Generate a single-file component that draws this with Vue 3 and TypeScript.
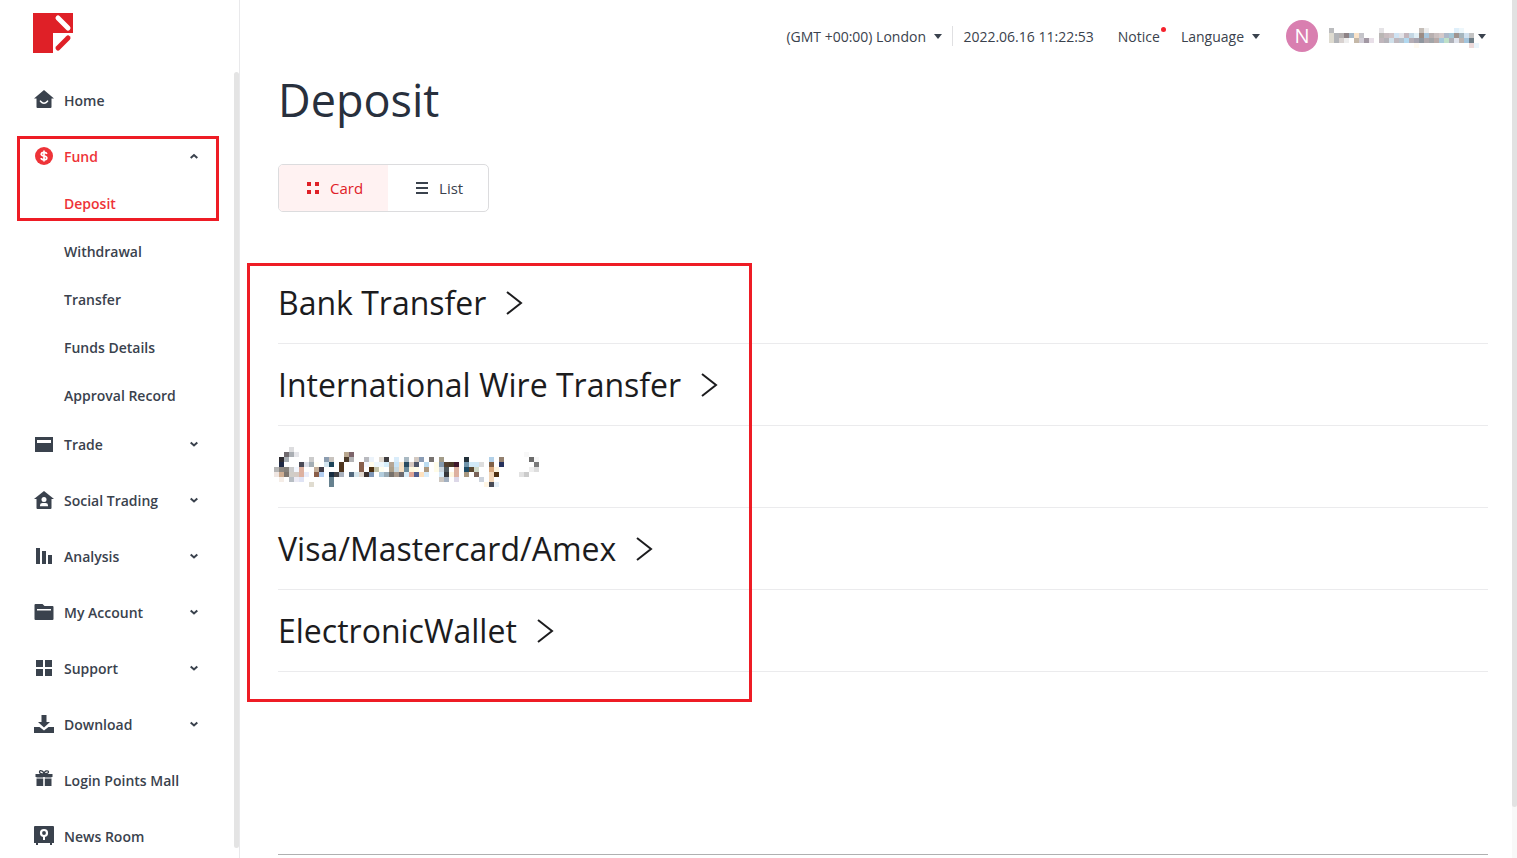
<script setup lang="ts">
import { ref } from 'vue'

interface NavItem {
  label: string
  icon: string
  expandable?: boolean
  children?: string[]
}

interface Cell {
  x: number
  y: number
  fill: string
}

const nav: NavItem[] = [
  { label: 'Home', icon: 'home' },
  {
    label: 'Fund',
    icon: 'fund',
    expandable: true,
    children: ['Deposit', 'Withdrawal', 'Transfer', 'Funds Details', 'Approval Record'],
  },
  { label: 'Trade', icon: 'trade', expandable: true },
  { label: 'Social Trading', icon: 'social', expandable: true },
  { label: 'Analysis', icon: 'analysis', expandable: true },
  { label: 'My Account', icon: 'account', expandable: true },
  { label: 'Support', icon: 'support', expandable: true },
  { label: 'Download', icon: 'download', expandable: true },
  { label: 'Login Points Mall', icon: 'gift' },
  { label: 'News Room', icon: 'news' },
]

const activeItem = 'Fund'
const activeChild = 'Deposit'
const view = ref<'card' | 'list'>('card')
const timezone = ref('london')

const methods: (string | null)[] = [
  'Bank Transfer',
  'International Wire Transfer',
  null,
  'Visa/Mastercard/Amex',
  'ElectronicWallet',
]

// Each string is one row of "column:colour" pairs.
function mosaic(rows: string[]): Cell[] {
  return rows.flatMap((row, y) =>
    row.split(' ').map((pair) => {
      const [col, hex] = pair.split(':')
      return { x: Number(col), y, fill: '#' + hex }
    }),
  )
}

const hiddenMethod = mosaic([
  '3:dddddf',
  '2:706a6e 3:aaaeb3 4:e6e6ea 14:b9a78f 15:7c646a 50:f8f8f8',
  '1:2d2b30 2:aab0b5 7:cccccc 10:8c9db0 11:c9c4bf 14:4b3a2a 15:b4b4b6 18:b9babf 19:ecf3fa 21:e0d9d0 22:3f3d40 24:d9ecfa 26:a9b9c3 28:d3c9c1 29:8a9cb5 31:77726f 33:a39c89 38:22303a 43:b3d1e8 45:93806f 51:6b6b6b 52:f7f7f7',
  '1:1f2944 5:4a4a56 6:dcdfe8 7:a3adb3 8:fffef5 10:d2e3ee 11:1c4459 13:4f361f 17:875f4c 18:f5f8ff 19:fffbea 20:eef7fc 21:eef7fc 22:d5eefb 23:b5a594 24:c7e3f7 25:f5e0c5 26:284a60 27:d6c8c0 28:4f5669 30:bcdcf0 32:fffce8 33:8499ad 34:54412f 35:4b3a28 36:40182c 38:6e93aa 39:d1e9f7 40:d1e9f7 41:dddddd 43:806046 45:25315c 52:7a7a7a',
  '0:b5b5b5 1:8e8983 2:85817b 3:cccccc 4:f2f7ff 5:ddb1a0 8:c4ae98 9:413c47 13:4f361f 17:875f4c 19:4b2f10 20:c3c3a8 21:fffef0 23:ada08b 24:c8d8e0 25:f8e1c4 26:6c8b9c 27:fff8df 28:fffbe8 30:ab977e 32:fffce8 33:cdd6de 34:4f585c 36:ddb1a0 38:1d4a64 39:5b4831 40:d1dbcb 43:d9a97f 44:fff5e0 51:eeeeee 52:dddddd',
  '0:efe6e2 1:cfae92 2:7d766f 3:d0cdc8 4:d4cbc5 5:ddb1a0 6:e8ecfa 8:8a5e48 9:b2cdf0 11:162c40 12:404044 13:a8b0bc 15:52687c 16:d5e5ec 17:e0d8d0 18:3a302d 19:7e96b5 21:b3cddd 22:9aabb5 23:76716c 24:a6978a 25:6c696d 26:d8ecf8 27:e0a595 28:4f5d8e 29:fde1bf 30:d8ecfa 33:d8ecfa 34:35363a 35:fff8e0 36:ddb1a0 38:a99880 40:7a6358 43:f2d6b8 44:4f3010 49:e2e2e2 50:cbcbcb',
  '1:f5ede7 3:b7bdc3 4:ecebf5 5:dfe3f4 11:66818f 33:ccc6c0 34:a3b0c0 36:ddd8e8 41:cdd3dc 43:f2d6b8',
  '7:e0dcd0 11:66818f 42:fff5e3 43:474a55 44:e4eff8',
])

const hiddenName = mosaic([
  '0:bbbcbe 10:e5e3e6 18:c5beb8 19:eeeeee 25:dfeffa 26:eef7fb',
  '0:dedbd0 1:b2b4b8 2:b5b0b0 3:8e8386 4:a5b8c8 5:fae3c9 6:c5c5ca 10:b9b6b4 11:c8bcc0 12:cfc3c6 13:cfe3f3 14:e3e3e8 15:c3b6bd 16:c3d6e3 17:e0eef5 18:9b8c84 19:a8c6dc 20:b8b0b0 21:cac0c0 22:d5c9c9 23:aeb8c8 24:a3c6d5 25:9f9490 26:a5b5bd 27:d0e0ee 28:c3c3c3',
  '0:dedbd0 1:b2b4b8 2:d8d2d0 3:eeeeee 5:c5b8a8 6:d0ccd5 7:a298a3 8:e8dfe8 10:c0b6bc 11:b4b2b8 12:d0e0ea 13:c0b8be 14:b5c0ca 15:b2d8ef 16:b5adb4 17:a6a4b0 18:8f969e 19:b0a8ac 20:a2a5a8 21:b8aaa8 22:a5c8da 23:bfe0c8 24:aeb0b8 25:dfe3ec 26:bcb3b0 27:a3c4dc 28:6f7f88',
  '17:fffaf2 28:ecdada 29:eaf5fc',
])
</script>

<template>
  <div class="shell">
    <aside class="sidebar">
      <a class="logo" href="#" aria-label="Client portal">
        <svg width="40" height="40" viewBox="0 0 40 40">
          <path d="M0 0h40v20H20v20H0z" fill="#df2027" />
          <path d="M25 5l10 10" stroke="#fff" stroke-width="5" stroke-linecap="round" />
          <path d="M25 35l10-10" stroke="#df2027" stroke-width="5" stroke-linecap="round" />
        </svg>
      </a>
      <nav class="nav">
        <div v-for="item in nav" :key="item.label" class="group" :class="{ open: item.children }">
          <component
            :is="item.expandable ? 'button' : 'a'"
            class="entry"
            :class="{ active: item.label === activeItem }"
            :href="item.expandable ? undefined : '#'"
            :type="item.expandable ? 'button' : undefined"
            :aria-expanded="item.expandable ? !!item.children : undefined"
          >
            <svg class="icon" width="20" height="20" viewBox="0 0 20 20" fill="currentColor" aria-hidden="true">
              <template v-if="item.icon === 'home'">
                <path d="M10 0l10 8.500h-2.500V17q0 1-1 1h-13q-1 0-1-1V8.500H0z" />
                <path d="M6.500 11.200q3.500 4 7 0" fill="none" stroke="#fff" stroke-width="1.600" stroke-linecap="round" />
              </template>
              <template v-else-if="item.icon === 'fund'">
                <circle cx="10" cy="10" r="9" />
                <path
                  d="M12.800 8q-.4-1.700-2.800-1.700T7.200 8.100q0 1.500 2.800 1.900t2.800 2q0 1.800-2.800 1.800T7.200 12M10 4.600v10.800"
                  fill="none" stroke="#fff" stroke-width="1.700"
                />
              </template>
              <path v-else-if="item.icon === 'trade'" fill-rule="evenodd" d="M1 3h18v15H1zM3 6v3h14V6z" />
              <template v-else-if="item.icon === 'social'">
                <path d="M10 1l10 8h-2.500v9q0 1-1 1h-13q-1 0-1-1V9H0z" />
                <circle cx="10" cy="9.500" r="2.500" fill="#fff" />
                <path d="M6 16.300v-1q0-2.300 2.500-2.300h3q2.500 0 2.500 2.300v1z" fill="#fff" />
              </template>
              <path v-else-if="item.icon === 'analysis'" d="M2 2h4v16H2zM8 5h4v13H8zM14 9h4v9h-4z" />
              <template v-else-if="item.icon === 'account'">
                <path d="M.5 3q0-1 1-1h7l2 2h8q1 0 1 1v12q0 1-1 1h-17q-1 0-1-1z" />
                <path d="M3 7h14v1.500H3z" fill="#fff" />
              </template>
              <path v-else-if="item.icon === 'support'" d="M2 2h7v7H2zM11 2h7v7h-7zM2 11h7v7H2zM11 11h7v7h-7z" />
              <path
                v-else-if="item.icon === 'download'"
                d="M7.500 1h5v7H16l-6 5.500L4 8h3.500zM0 13h5.500l4.500 3.500 4.500-3.500H20v6H0z"
              />
              <template v-else-if="item.icon === 'gift'">
                <path d="M1.500 4h17v3h-17zM2.500 9h6.700v7H2.500zM10.800 9h6.700v7h-6.700z" />
                <path d="M2.500 7h6.700v2H2.500zM10.800 7h6.700v2h-6.700z" opacity=".5" />
                <path
                  d="M10 4Q5.500 4 5.500 2T7.500.8Q9.500 1 10 4 10.500 1 12.500.8T14.500 2 10 4"
                  fill="none" stroke="currentColor" stroke-width="1.300"
                />
              </template>
              <template v-else>
                <path d="M1 0h18q1 0 1 1v16h-2v2h-2v-2H4v2H2v-2H0V1q0-1 1-1z" />
                <circle cx="10" cy="7" r="3" fill="none" stroke="#fff" stroke-width="2.200" />
                <path d="M9 10h2v4H9z" fill="#fff" />
              </template>
            </svg>
            <span class="label">{{ item.label }}</span>
            <svg v-if="item.expandable" class="caret" width="8" height="6" viewBox="0 0 8 6" aria-hidden="true">
              <path :d="item.children ? 'M.7 5L4 2l3.300 3' : 'M.7 1.500L4 4.500l3.300-3'" />
            </svg>
          </component>
          <ul v-if="item.children" class="sub">
            <li v-for="child in item.children" :key="child">
              <a href="#" class="child" :class="{ active: child === activeChild }">{{ child }}</a>
            </li>
          </ul>
          <span v-if="item.children" class="mark mark-nav"></span>
        </div>
      </nav>
      <span class="thumb"></span>
    </aside>

    <main class="main">
      <header class="topbar">
        <label class="zone">
          <select v-model="timezone" aria-label="Time zone">
            <option value="london">(GMT +00:00) London</option>
          </select>
          <span class="arrow"></span>
        </label>
        <time class="clock">2022.06.16 11:22:53</time>
        <a class="notice" href="#">Notice<span class="dot"></span></a>
        <button class="language" type="button" aria-haspopup="true">Language<span class="arrow"></span></button>
        <button class="user" type="button" aria-haspopup="true" aria-label="Profile">
          <span class="avatar">N</span>
          <svg class="name" width="150" height="20" viewBox="0 0 30 4" shape-rendering="crispEdges" aria-hidden="true">
            <rect v-for="(c, i) in hiddenName" :key="i" :x="c.x" :y="c.y" width="1" height="1" :fill="c.fill" />
          </svg>
          <span class="arrow"></span>
        </button>
      </header>

      <h1>Deposit</h1>

      <div class="toggle" role="group" aria-label="View">
        <button type="button" :class="{ on: view === 'card' }" :aria-pressed="view === 'card'" @click="view = 'card'">
          <svg width="14" height="12" viewBox="0 0 14 12" fill="currentColor" aria-hidden="true">
            <path d="M1 0h4v4H1zM9 0h4v4H9zM1 8h4v4H1zM9 8h4v4H9z" />
          </svg>
          Card
        </button>
        <button type="button" :class="{ on: view === 'list' }" :aria-pressed="view === 'list'" @click="view = 'list'">
          <svg width="14" height="12" viewBox="0 0 14 12" fill="currentColor" aria-hidden="true">
            <path d="M1 0h12v2H1zM1 5h12v2H1zM1 10h12v2H1z" />
          </svg>
          List
        </button>
      </div>

      <section class="methods">
        <ul>
          <li v-for="(method, i) in methods" :key="i">
            <a v-if="method" href="#">
              {{ method }}
              <svg width="17" height="24" viewBox="0 0 17 24" aria-hidden="true">
                <path d="M1 1l14 11L1 23" fill="none" stroke="#1c1c1e" stroke-width="2" />
              </svg>
            </a>
            <a v-else href="#" aria-label="Other method">
              <svg class="blocks" width="265" height="40" viewBox="0 0 53 8" shape-rendering="crispEdges">
                <rect v-for="(c, k) in hiddenMethod" :key="k" :x="c.x" :y="c.y" width="1" height="1" :fill="c.fill" />
              </svg>
            </a>
          </li>
        </ul>
        <span class="mark mark-methods"></span>
      </section>

      <footer class="foot"></footer>
    </main>
    <div class="scroll"><span></span></div>
  </div>
</template>

<style>
body {
  margin: 0;
  background: #fff;
}
</style>

<style scoped>
* {
  box-sizing: border-box;
}

.shell {
  display: flex;
  height: 100vh;
  overflow: hidden;
  color: #3a424d;
  font-family: 'Open Sans', 'Noto Sans', sans-serif;
  font-size: 14px;
}

button,
select {
  padding: 0;
  border: 0;
  background: none;
  color: inherit;
  font: inherit;
  cursor: pointer;
}

a {
  color: inherit;
  text-decoration: none;
}

ul {
  margin: 0;
  padding: 0;
  list-style: none;
}

.sidebar {
  position: relative;
  flex: none;
  width: 240px;
  border-right: 1px solid #e9e9eb;
}

.logo {
  display: block;
  height: 76px;
  padding: 13px 33px;
}

.logo svg {
  display: block;
}

.group {
  position: relative;
  margin-bottom: 8px;
}

.group.open {
  margin-bottom: 0;
}

.entry {
  display: flex;
  align-items: center;
  width: 100%;
  height: 48px;
  padding: 0 41px 0 34px;
  font-weight: 600;
  text-align: left;
}

.icon {
  flex: none;
  margin-right: 10px;
}

.label {
  flex: 1;
}

.caret {
  fill: none;
  stroke: #3a424d;
  stroke-width: 2;
}

.entry.active,
.child.active {
  color: #ee3338;
}

.child {
  display: block;
  padding-left: 64px;
  font-weight: 600;
  line-height: 48px;
}

.mark {
  position: absolute;
  border: 3px solid #ee1c25;
  pointer-events: none;
}

.mark-nav {
  top: 4px;
  left: 17px;
  width: 202px;
  height: 85px;
}

.thumb {
  position: absolute;
  top: 72px;
  right: 0;
  bottom: 10px;
  width: 5px;
  border-radius: 3px;
  background: #e4e4e4;
}

.main {
  display: flex;
  flex: 1;
  flex-direction: column;
  min-width: 0;
  padding: 0 24px 0 38px;
}

.topbar {
  display: flex;
  flex: none;
  align-items: center;
  justify-content: flex-end;
  height: 72px;
  padding-right: 2px;
  white-space: nowrap;
}

.arrow {
  flex: none;
  border: solid transparent;
  border-width: 5px 4px 0;
  border-top-color: #3a424d;
}

.zone {
  display: flex;
  align-items: center;
  height: 20px;
  padding-right: 10px;
  border-right: 1px solid #e0e0e2;
}

.zone select {
  appearance: none;
  margin-right: 8px;
}

.clock {
  margin: 0 24px 0 10px;
}

.notice {
  position: relative;
  margin-right: 21px;
}

.dot {
  position: absolute;
  top: 0;
  right: -6px;
  width: 5px;
  height: 5px;
  border-radius: 50%;
  background: #f5222d;
}

.language {
  display: flex;
  align-items: center;
  gap: 8px;
  margin-right: 26px;
}

.user {
  display: flex;
  align-items: center;
}

.avatar {
  width: 32px;
  margin-right: 11px;
  border-radius: 50%;
  background: #d97fb0;
  color: #fff;
  font-size: 20px;
  line-height: 32px;
}

.name {
  margin: 4px -1px 0 0;
}

h1 {
  margin: 0;
  color: #28303d;
  font-size: 45px;
  font-weight: 400;
  line-height: 56px;
}

.toggle {
  display: flex;
  align-self: flex-start;
  height: 48px;
  margin: 36px 0 50px;
  overflow: hidden;
  border: 1px solid #dcdcde;
  border-radius: 5px;
}

.toggle button {
  display: flex;
  align-items: center;
  gap: 10px;
  padding: 0 25px 0 27px;
  font-size: 15px;
}

.toggle .on {
  background: #fff2f2;
  color: #df2027;
}

.methods {
  position: relative;
}

.methods li {
  border-bottom: 1px solid #ebebed;
}

.methods a {
  display: flex;
  align-items: center;
  gap: 20px;
  height: 81px;
  color: #1c1c1e;
  font-size: 32px;
}

.blocks {
  margin-left: -4px;
}

.mark-methods {
  top: 1px;
  left: -31px;
  width: 505px;
  height: 439px;
}

.foot {
  height: 4px;
  margin-top: auto;
  border-top: 1px solid #b0b0b0;
}

.scroll {
  flex: none;
  width: 5px;
  background: #f8f8f8;
}

.scroll span {
  display: block;
  height: 94%;
  border-radius: 0 0 3px 3px;
  background: #e2e2e2;
}
</style>
